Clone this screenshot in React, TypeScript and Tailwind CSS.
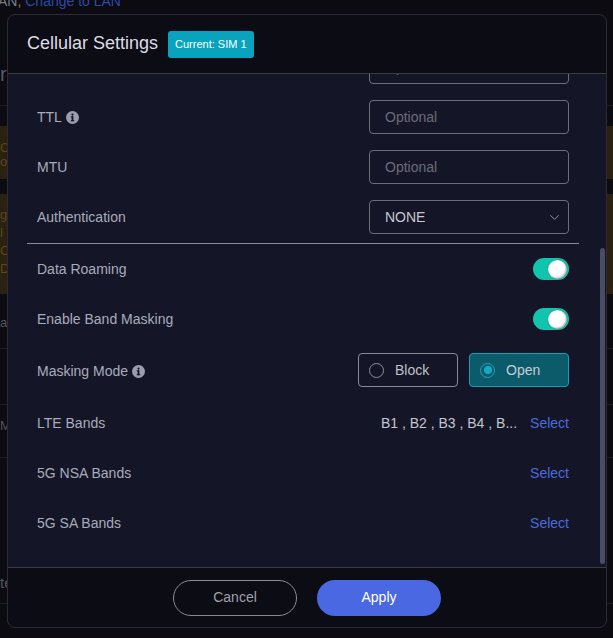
import React from "react";
import { ChevronDown } from "lucide-react";

function InfoIcon() {
  return (
    <svg width="13" height="13" viewBox="0 0 16 16" className="shrink-0">
      <circle cx="8" cy="8" r="8" fill="#9c9eb0" />
      <circle cx="8" cy="4.4" r="1.4" fill="#141627" />
      <rect x="6.9" y="6.6" width="2.2" height="6" rx="0.4" fill="#141627" />
      <rect x="5.8" y="6.6" width="3" height="1.3" fill="#141627" />
      <rect x="5.8" y="11.3" width="4.4" height="1.3" fill="#141627" />
    </svg>
  );
}

function Toggle() {
  return (
    <div className="w-[36px] h-[22px] rounded-full bg-[#10c4ae] flex items-center justify-end pr-[2px]">
      <div className="w-[19px] h-[19px] rounded-full bg-white shadow-[inset_-1px_-1px_2px_rgba(0,0,0,0.35),0_0_1px_rgba(0,0,0,0.5)]" />
    </div>
  );
}

function InputRow({ label, info }: { label?: string; info?: boolean }) {
  return (
    <div className="h-[50px] flex items-center justify-between px-[10px]">
      <div className="flex items-center gap-[4px] text-[14px] text-[#a9abbb]">
        {label}
        {info && <InfoIcon />}
      </div>
      <div className="w-[200px] h-[34px] border border-[#6c6d79] rounded-[4px] flex items-center pl-[15px] text-[14px] text-[#6a6c79]">
        Optional
      </div>
    </div>
  );
}

function Row({ label, children, h = "h-[50px]", info }: { label: string; children?: React.ReactNode; h?: string; info?: boolean }) {
  return (
    <div className={`${h} flex items-center justify-between px-[10px]`}>
      <div className="flex items-center gap-[4px] text-[14px] text-[#a9abbb]">
        {label}
        {info && <InfoIcon />}
      </div>
      <div className="flex items-center">{children}</div>
    </div>
  );
}

function BackgroundPage() {
  return (
    <div className="flex flex-col w-full text-[13px] leading-[14px]">
      <div className="h-[10px] overflow-hidden">
        <div className="mt-[-7px] ml-[-2px] text-[14px] leading-[16px] text-[#7b7b86] whitespace-nowrap">
          AN, <span className="text-[#2c4aa8]">Change to LAN</span>
        </div>
      </div>
      <div className="h-[54px]" />
      <div className="h-[20px] text-[20px] leading-[20px] text-[#5c5c65]">r</div>
      <div className="h-[22px] border-b border-[#1c1c26]" />
      <div className="h-[20px]" />
      <div className="h-[53px] bg-[#2b2110] text-[#5c4719] flex flex-col pt-[15px]">
        <span>Ca</span>
        <span>or</span>
      </div>
      <div className="h-[15px]" />
      <div className="h-[100px] bg-[#2b2110] text-[#5c4719] flex flex-col pt-[14px] gap-[4px]">
        <span>g</span>
        <span>l</span>
        <span>Ca</span>
        <span>De</span>
      </div>
      <div className="h-[22px]" />
      <div className="h-[18px] text-[#55555e]">al</div>
      <div className="h-[15px] border-b border-[#1c1c26]" />
      <div className="h-[56px] border-b border-[#1c1c26]" />
      <div className="h-[14px]" />
      <div className="h-[18px] text-[#55555e]">M</div>
      <div className="h-[21px] border-b border-[#1c1c26]" />
      <div className="h-[118px]" />
      <div className="h-[18px] text-[15px] text-[#55555e]">te</div>
      <div className="h-[10px] border-b border-[#1c1c26]" />
    </div>
  );
}

export default function App() {
  return (
    <div className="relative w-[613px] h-[638px] overflow-hidden bg-[#0b0b11] font-['Liberation_Sans',Arial,sans-serif]">
      <BackgroundPage />
      <div className="absolute left-[7px] top-[14px] w-[600px] h-[614px] flex flex-col rounded-[8px] border border-[#2a2b36] overflow-hidden bg-[#0c0c15]">
        {/* Header */}
        <div className="h-[59px] shrink-0 flex items-center gap-[10px] pl-[19px] pb-[2px] border-b border-[#3a3b46]">
          <span className="text-[18px] text-[#dcdce4]">Cellular Settings</span>
          <span className="h-[27px] px-[7px] flex items-center rounded-[3px] bg-[#0aa3bd] text-[11px] text-white mt-[2px]">
            Current: SIM 1
          </span>
        </div>

        {/* Body */}
        <div className="relative flex-1 overflow-hidden bg-[#141627]">
          <div className="flex flex-col mt-[-32px] pl-[19px] pr-[27px]">
            <InputRow />
            <InputRow label="TTL" info />
            <InputRow label="MTU" />
            <Row label="Authentication">
              <div className="w-[200px] h-[34px] border border-[#6c6d79] rounded-[4px] flex items-center justify-between pl-[15px] pr-[6px] text-[14px] text-[#c6c7d0]">
                NONE
                <ChevronDown size={15} strokeWidth={1.5} className="text-[#9a9ba6]" />
              </div>
            </Row>
            <div className="h-px bg-[#8a8b96] mt-px" />
            <Row label="Data Roaming">
              <Toggle />
            </Row>
            <Row label="Enable Band Masking">
              <Toggle />
            </Row>
            <Row label="Masking Mode" info h="h-[54px]">
              <div className="flex gap-[11px] mt-[-2px]">
                <div className="w-[100px] h-[34px] rounded-[4px] border border-[#8a8b96] flex items-center gap-[11px] pl-[10px] text-[14px] text-[#c0c1c9]">
                  <span className="w-[15px] h-[15px] rounded-full border border-[#8e8f9a]" />
                  Block
                </div>
                <div className="w-[100px] h-[34px] rounded-[4px] border border-[#139fb6] bg-[#0b5b6b] flex items-center gap-[11px] pl-[10px] text-[14px] text-[#c8ccd4]">
                  <span className="w-[15px] h-[15px] rounded-full border border-[#18a8c0] flex items-center justify-center">
                    <span className="w-[8px] h-[8px] rounded-full bg-[#18a8c0]" />
                  </span>
                  Open
                </div>
              </div>
            </Row>
            <Row label="LTE Bands">
              <span className="text-[14px] text-[#c4c5cd] mr-[13px]">B1 , B2 , B3 , B4 , B...</span>
              <span className="text-[14px] text-[#4c69df]">Select</span>
            </Row>
            <Row label="5G NSA Bands">
              <span className="text-[14px] text-[#4c69df]">Select</span>
            </Row>
            <Row label="5G SA Bands">
              <span className="text-[14px] text-[#4c69df]">Select</span>
            </Row>
            <div className="h-[19px]" />
          </div>
          <div className="absolute right-[1px] top-[174px] bottom-[3px] w-[5px] rounded-full bg-[#4a4b64]" />
        </div>

        {/* Footer */}
        <div className="h-[60px] shrink-0 flex items-center justify-center gap-[20px] border-t border-[#3a3b46]">
          <button className="w-[124px] h-[36px] rounded-full border border-[#8a8b96] text-[14px] text-[#9fa0ab]">
            Cancel
          </button>
          <button className="w-[124px] h-[36px] rounded-full bg-[#4a68e2] text-[14px] text-white">
            Apply
          </button>
        </div>
      </div>
    </div>
  );
}
